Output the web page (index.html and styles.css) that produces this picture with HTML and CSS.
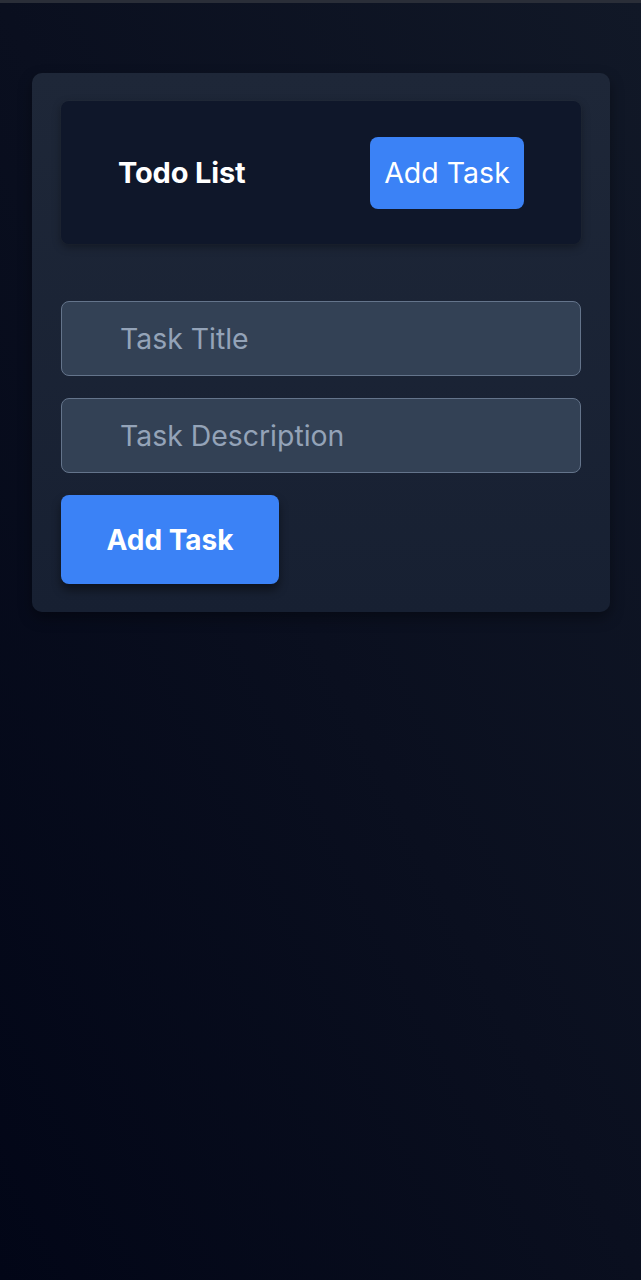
FILE: index.html
```html
<!DOCTYPE html>
<html lang="en">
<head>
<meta charset="utf-8">
<title>Todo List</title>
<link rel="stylesheet" href="styles.css">
</head>
<body>
<div class="topline"></div>
<main class="page">
  <section class="card">
    <header class="header">
      <h1 class="title">Todo List</h1>
      <button class="btn-small">Add Task</button>
    </header>
    <form class="form">
      <input class="field" type="text" placeholder="Task Title">
      <input class="field" type="text" placeholder="Task Description">
      <div class="actions">
        <button class="btn-main" type="button">Add Task</button>
      </div>
    </form>
  </section>
</main>
</body>
</html>
```

FILE: styles.css
```css
* { box-sizing: border-box; }
html, body { margin: 0; padding: 0; height: 100%; }
body {
  font-family: Inter, "Noto Sans", sans-serif;
  background: linear-gradient(to top right, #020617 0%, #0a0f1f 50%, #111827 100%);
  min-height: 1280px;
  color: #fff;
}
.topline {
  height: 3px;
  background: #2a2e38;
}
.page {
  padding: 70px 31px 0 32px;
}
.card {
  background: linear-gradient(180deg, #1e2738 0%, #172032 100%);
  border-radius: 10px;
  padding: 28px 29px 28px 29px;
  box-shadow: 0 6px 14px rgba(0,0,0,0.35);
}
.header {
  background: #0f172a;
  border-radius: 8px;
  height: 143px;
  padding: 0 57px;
  display: flex;
  align-items: center;
  justify-content: space-between;
  box-shadow: 0 3px 8px rgba(0,0,0,0.35), 0 0 0 1px rgba(255,255,255,0.02);
}
.title {
  margin: 0;
  font-size: 29px;
  font-weight: 700;
  letter-spacing: -0.15px;
  color: #fff;
}
.btn-small {
  font-family: inherit;
  background: #3b82f6;
  color: #fff;
  border: none;
  border-radius: 8px;
  width: 154px;
  height: 72px;
  font-size: 28.5px;
  font-weight: 400;
  padding: 0;
}
.form {
  margin-top: 57px;
  display: flex;
  flex-direction: column;
  gap: 22px;
}
.field {
  font-family: inherit;
  width: 100%;
  height: 75px;
  background: #334155;
  border: 1.5px solid #64748b;
  border-radius: 8px;
  padding: 0 0 0 58px;
  font-size: 28.4px;
  color: #e2e8f0;
  outline: none;
}
.field::placeholder { color: #94a3b8; }
.actions { display: flex; }
.btn-main {
  font-family: inherit;
  background: #3b82f6;
  color: #fff;
  border: none;
  border-radius: 8px;
  width: 218px;
  height: 89px;
  font-size: 28px;
  font-weight: 700;
  padding: 0;
  box-shadow: 0 6px 10px rgba(0,0,0,0.45);
}
```
